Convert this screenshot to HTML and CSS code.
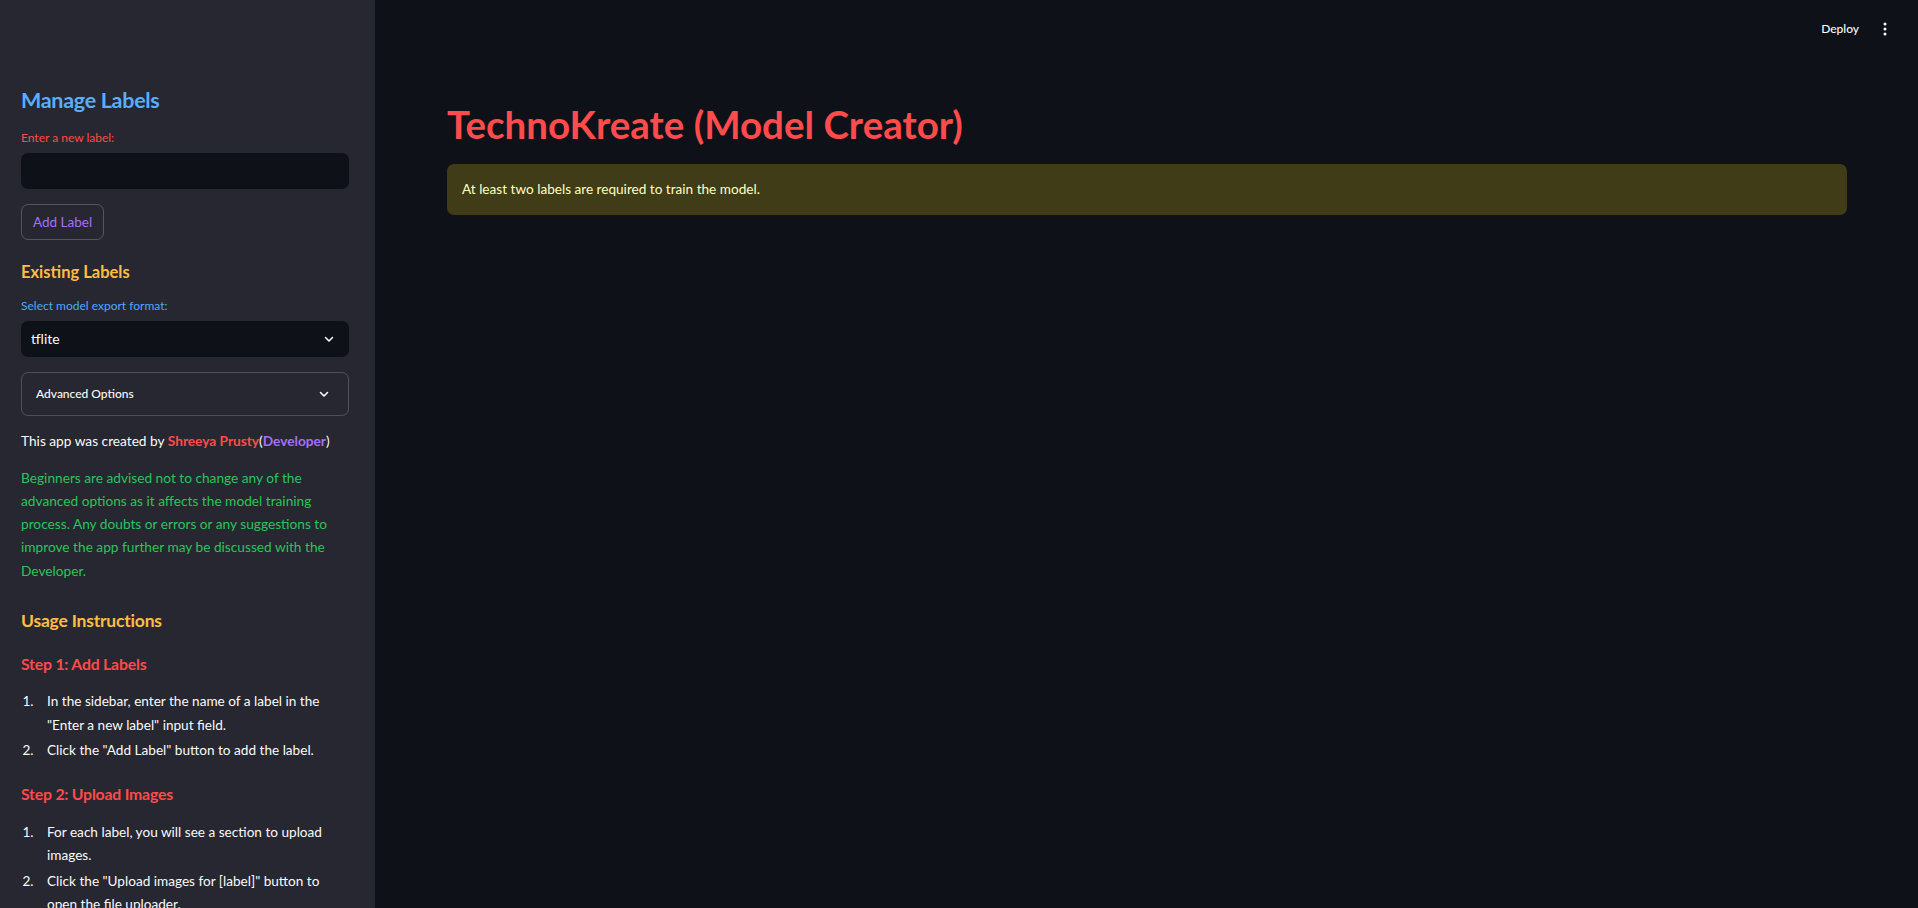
FILE: index.html
```html
<!DOCTYPE html>
<html lang="en">
<head>
<meta charset="utf-8">
<title>TechnoKreate (Model Creator)</title>
<link rel="stylesheet" href="styles.css">
</head>
<body>
<div class="app">
  <aside class="sidebar">
    <h2 class="sb-title">Manage Labels</h2>
    <label class="field-label red">Enter a new label:</label>
    <div class="text-input"></div>
    <button class="btn">Add Label</button>
    <h3 class="sb-h3 orange">Existing Labels</h3>
    <label class="field-label blue">Select model export format:</label>
    <div class="select">
      <span>tflite</span>
      <svg class="chev" width="12" height="12" viewBox="0 0 12 12"><polyline points="2.5,4.5 6,8 9.5,4.5" fill="none" stroke="#fafafa" stroke-width="1.6" stroke-linecap="round" stroke-linejoin="round"/></svg>
    </div>
    <div class="expander">
      <span>Advanced Options</span>
      <svg class="chev" width="12" height="12" viewBox="0 0 12 12"><polyline points="2.5,4.5 6,8 9.5,4.5" fill="none" stroke="#fafafa" stroke-width="1.6" stroke-linecap="round" stroke-linejoin="round"/></svg>
    </div>
    <p class="credit">This app was created by <b class="red">Shreeya Prusty</b>(<b class="purple">Developer</b>)</p>
    <p class="note">Beginners are advised not to change any of the advanced options as it affects the model training process. Any doubts or errors or any suggestions to improve the app further may be discussed with the Developer.</p>
    <h3 class="sb-h3b orange">Usage Instructions</h3>
    <h4 class="step red">Step 1: Add Labels</h4>
    <ol class="steps">
      <li>In the sidebar, enter the name of a label in the "Enter a new label" input field.</li>
      <li>Click the "Add Label" button to add the label.</li>
    </ol>
    <h4 class="step red">Step 2: Upload Images</h4>
    <ol class="steps">
      <li>For each label, you will see a section to upload images.</li>
      <li>Click the "Upload images for [label]" button to open the file uploader.</li>
    </ol>
  </aside>
  <main class="main">
    <header class="topbar">
      <span class="deploy">Deploy</span>
      <svg class="kebab" width="6" height="14" viewBox="0 0 6 14"><circle cx="3" cy="2" r="1.5" fill="#fafafa"/><circle cx="3" cy="7" r="1.5" fill="#fafafa"/><circle cx="3" cy="12" r="1.5" fill="#fafafa"/></svg>
    </header>
    <section class="content">
      <h1 class="title">TechnoKreate (Model Creator)</h1>
      <div class="alert">At least two labels are required to train the model.</div>
    </section>
  </main>
</div>
</body>
</html>
```

FILE: styles.css
```css
* { box-sizing: border-box; }
html, body {
  margin: 0;
  padding: 0;
  height: 100%;
  overflow: hidden;
  background: #0e1117;
  color: #fafafa;
  font-family: "Lato", "Open Sans", sans-serif;
}
.app {
  display: flex;
  height: 908px;
}
.sidebar {
  width: 375px;
  flex: none;
  background: #262730;
  padding: 85px 26px 0 21px;
  display: flex;
  flex-direction: column;
  align-items: stretch;
  overflow: hidden;
}
.sidebar > * { flex: none; }
.red { color: #ff4b4b; }
.blue { color: #4fa8ff; }
.orange { color: #ffbd45; }
.purple { color: #a371f7; }

.sb-title {
  margin: 0;
  font-size: 21.5px;
  letter-spacing: -0.3px;
  line-height: 30px;
  font-weight: 700;
  color: #58aefc;
}
.field-label {
  display: block;
  font-size: 12px;
  line-height: 16px;
  margin-top: 15px;
}
.text-input {
  margin-top: 7px;
  height: 36px;
  background: #0e1117;
  border-radius: 7px;
}
.btn {
  align-self: flex-start;
  margin-top: 15px;
  height: 36px;
  padding: 0 11px;
  background: transparent;
  border: 1px solid rgba(250,250,250,0.22);
  border-radius: 7px;
  color: #a371f7;
  font-family: inherit;
  font-size: 13.5px;
}
.sb-h3 {
  margin: 20.5px 0 0;
  font-size: 16.5px;
  line-height: 22px;
  font-weight: 700;
}
.select {
  margin-top: 7px;
  height: 36px;
  background: #0e1117;
  border-radius: 7px;
  display: flex;
  align-items: center;
  justify-content: space-between;
  padding: 0 14px 0 10px;
  font-size: 14px;
}
.expander {
  margin-top: 15px;
  height: 44px;
  border: 1px solid rgba(250,250,250,0.2);
  border-radius: 7px;
  display: flex;
  align-items: center;
  justify-content: space-between;
  padding: 0 18px 0 14px;
  font-size: 12px;
  font-weight: 500;
}
.chev { display: block; }
.credit {
  margin: 15.5px 0 0;
  font-size: 13.7px;
  line-height: 20px;
}
.credit b { font-weight: 700; }
.note {
  margin: 14.5px 0 0;
  font-size: 13.7px;
  line-height: 23.3px;
  color: #2bc45a;
}
.sb-h3b {
  margin: 26px 0 0;
  font-size: 17.5px;
  letter-spacing: -0.2px;
  line-height: 26px;
  font-weight: 700;
}
.step {
  margin: 19px 0 0;
  font-size: 15.8px;
  letter-spacing: -0.2px;
  line-height: 22px;
  font-weight: 700;
}
.steps {
  margin: 15.5px 0 0;
  padding-left: 16px;
  font-size: 13.6px;
  line-height: 23.3px;
}
.steps li { padding-left: 10px; margin-bottom: 2.4px; }
.steps + .step { margin-top: 18px; }

.main {
  flex: 1;
  display: flex;
  flex-direction: column;
  min-width: 0;
}
.topbar {
  display: flex;
  justify-content: flex-end;
  align-items: center;
  gap: 23px;
  padding: 19px 30px 0 0;
  height: 39px;
  flex: none;
}
.deploy {
  font-size: 12px;
  line-height: 20px;
  font-weight: 500;
}
.kebab { display: block; }
.content {
  padding: 62px 71px 0 72px;
}
.title {
  margin: 0;
  font-size: 38.5px;
  line-height: 46px;
  font-weight: 700;
  color: #ff4b4b;
}
.alert {
  margin-top: 17px;
  background: #3f3c17;
  border-radius: 7px;
  padding: 14.5px 15px 16.5px;
  font-size: 13.6px;
  line-height: 20px;
  color: #ffffc2;
}
```
